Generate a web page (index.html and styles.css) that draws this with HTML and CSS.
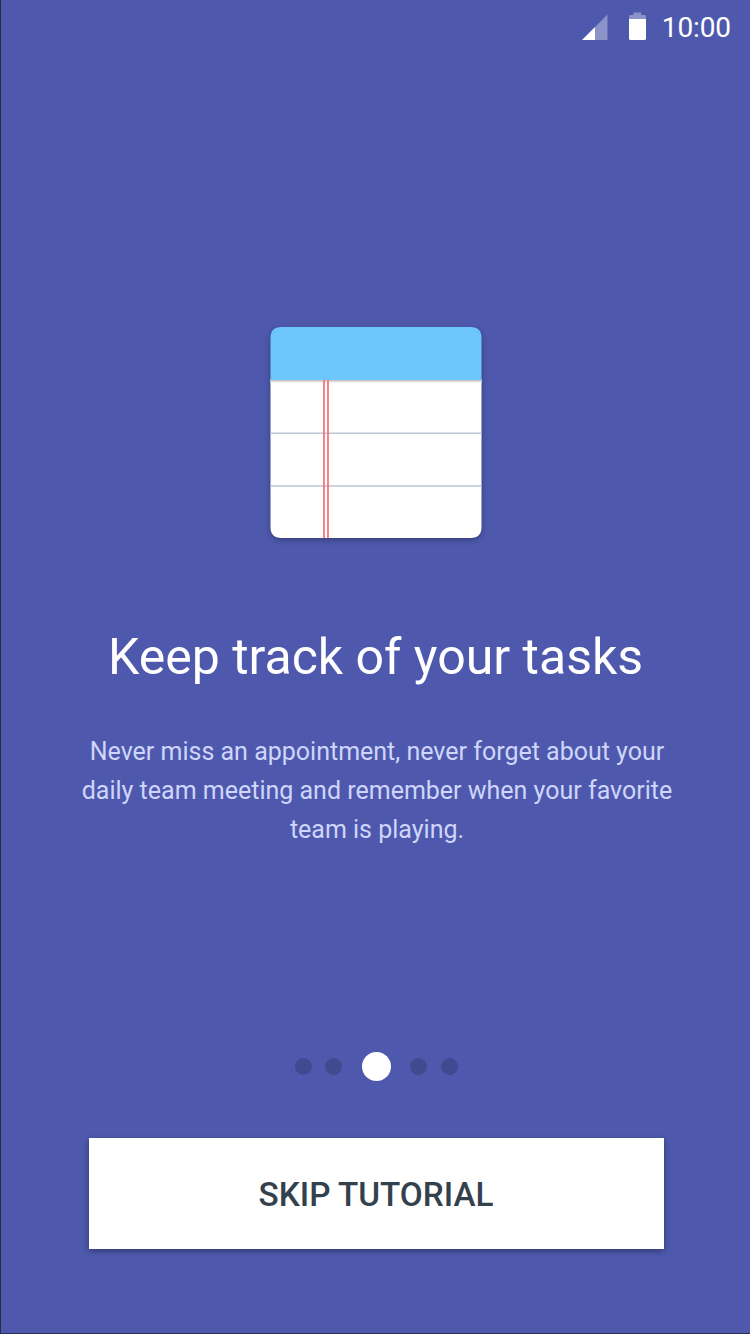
FILE: index.html
```html
<!DOCTYPE html>
<html lang="en">
<head>
<meta charset="utf-8">
<title>Keep track of your tasks</title>
<link rel="stylesheet" href="styles.css">
</head>
<body>
<main class="screen">
  <header class="status">
    <svg class="signal" width="26" height="26" viewBox="0 0 26 26" aria-hidden="true"><path class="dim" d="M13 13 25.5 .5V26H13Z"/><path d="M0 26 13 13V26Z"/></svg>
    <svg class="battery" width="18" height="28" viewBox="0 0 18 28" aria-hidden="true"><path class="dim" d="M5.500 .5H13V3H16.500Q18 3 18 4.500V7H1V4.500Q1 3 2.500 3H5.500Z"/><path d="M1 7H18V26.500Q18 28 16.500 28H2.500Q1 28 1 26.500Z"/></svg>
    <time class="clock">10:00</time>
  </header>
  <svg class="note" width="212" height="212" viewBox="0 0 212 212" aria-hidden="true">
    <path d="M.5 52H211.500V200Q211.500 211 200.500 211H11.500Q.5 211 .5 200Z" fill="#fff"/>
    <path d="M.5 53V11Q.5 0 11.500 0H200.500Q211.500 0 211.500 11V53Z" fill="#6ec6ff"/>
    <path d="M.5 53.500H211.500" stroke="#cbcbcb"/>
    <path d="M.5 54.500H211.500" stroke="#dedada"/>
    <path d="M.5 55.500H211.500" stroke="#f7f7f7"/>
    <path d="M.5 106.200H211.500M.5 159H211.500" stroke="#bdc6d4" stroke-width="1.500"/>
    <path d="M54 53V211M58 53V211" stroke="#f96468" stroke-width="1.600"/>
  </svg>
  <h1 class="title">Keep track of your tasks</h1>
  <p class="text">Never miss an appointment, never forget about your<br>daily team meeting and remember when your favorite<br>team is playing.</p>
  <nav class="dots"><i class="dot"></i><i class="dot"></i><i class="dot current"></i><i class="dot"></i><i class="dot"></i></nav>
  <button class="skip">SKIP TUTORIAL</button>
</main>
</body>
</html>
```
FILE: styles.css
```css
* { box-sizing: border-box; }
body { margin: 0; font-family: Roboto, sans-serif; }
.screen { width: 750px; height: 1334px; background: #4e59ad; border-left: 1px solid #272d45; border-bottom: 1px solid #2b3056; display: flex; flex-direction: column; align-items: center; color: #fff; }
.status { width: 100%; height: 54px; display: flex; padding-right: 19px; justify-content: flex-end; }
.status svg { fill: #fff; }
.status .dim { opacity: .35; }
.signal { margin: 14px 20px 0 0; }
.battery { margin: 12px 16px 0 0; }
.clock { font-size: 28px; line-height: 56px; letter-spacing: -.1px; }
.note { flex: none; margin-top: 273px; filter: drop-shadow(0 2px 3px rgba(0,0,0,.3)); }
.title { margin: 82px 0 0; font-size: 50px; line-height: 72px; font-weight: 400; white-space: nowrap; }
.text { margin: 39px 0 0; padding-left: 3px; font-size: 25px; line-height: 39px; text-align: center; white-space: nowrap; color: #cfd5fb; }
.dots { margin-top: 203px; padding-left: 1px; height: 29px; display: flex; align-items: center; gap: 13.500px; }
.dot { width: 17px; height: 17px; border-radius: 50%; background: #404a91; }
.dot.current { width: 29px; height: 29px; background: #fff; margin: 0 6px; }
.skip { width: 575px; height: 111px; margin: 57px 0 0 1px; padding: 2px 0 0; border: 0; background: #fff; font: 500 33.300px/109px Roboto, sans-serif; color: #33414d; box-shadow: 0 2px 6px rgba(0,0,0,.38); }
```
